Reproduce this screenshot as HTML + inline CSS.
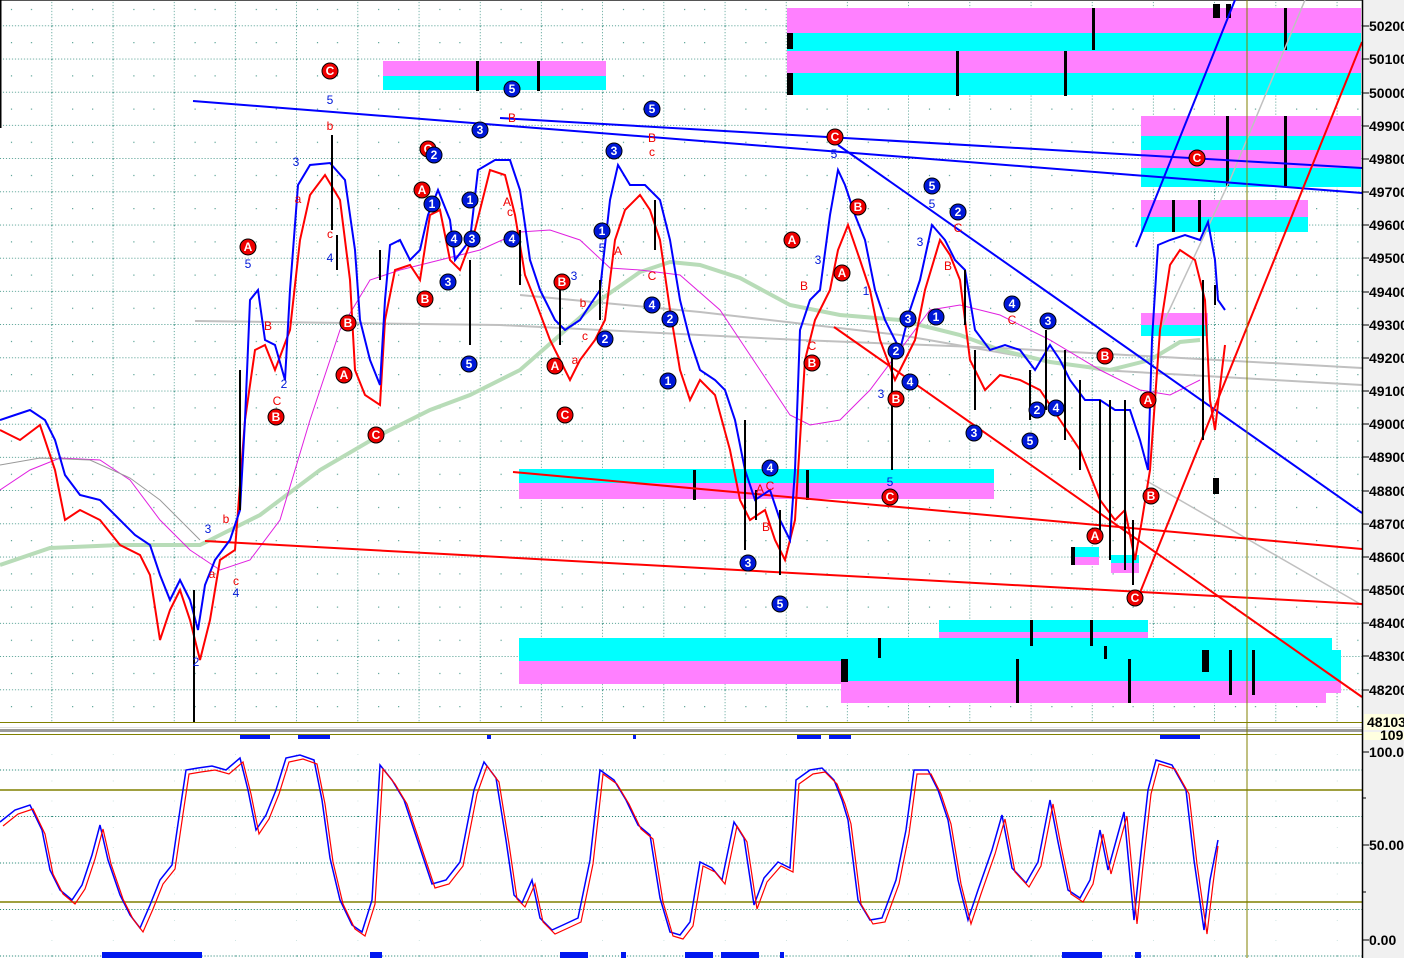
<!DOCTYPE html>
<html><head><meta charset="utf-8"><style>
html,body{margin:0;padding:0;background:#fff;}
svg{display:block;font-family:"Liberation Sans",sans-serif;}
.ax{font-family:"Liberation Sans",sans-serif;font-size:14px;font-weight:bold;fill:#000;}
.cr{fill:#e00;stroke:#000;stroke-width:1}
.cb{fill:#0018d8;stroke:#000;stroke-width:1}
.lt{fill:#fff;font-size:12px;font-weight:bold;text-anchor:middle}
.rt{fill:#e00;font-size:12px;text-anchor:middle}
.bt{fill:#0018d8;font-size:12px;text-anchor:middle}
circle.cr,circle.cb{r:8px}
</style></head><body>
<svg width="1404" height="958" viewBox="0 0 1404 958" xmlns="http://www.w3.org/2000/svg">
<defs>
<pattern id="g" x="-9" y="-7" width="61.2" height="33.2" patternUnits="userSpaceOnUse">
<line x1="0" y1="33" x2="61.2" y2="33" stroke="#107a68" stroke-width="1" stroke-dasharray="1,2"/>
<line x1="61" y1="0" x2="61" y2="33.2" stroke="#107a68" stroke-width="1" stroke-dasharray="1,2"/>
<rect x="20" y="16" width="1" height="1" fill="#107a68"/><rect x="40" y="16" width="1" height="1" fill="#107a68"/>
</pattern>
<pattern id="g2" x="-9" y="-20" width="61.2" height="46.5" patternUnits="userSpaceOnUse">
<line x1="0" y1="46" x2="61.2" y2="46" stroke="#107a68" stroke-width="1" stroke-dasharray="1,2"/>
<rect x="61" y="10" width="1" height="1" fill="#107a68"/><rect x="61" y="30" width="1" height="1" fill="#107a68"/>
</pattern>
</defs>
<rect x="0" y="0" width="1362" height="722" fill="url(#g)"/>
<rect x="0" y="736" width="1362" height="222" fill="url(#g2)"/>
<line x1="0" y1="0.5" x2="1362" y2="0.5" stroke="#555"/>
<line x1="0.5" y1="0" x2="0.5" y2="128" stroke="#000" stroke-width="2"/>

<rect x="787" y="8" width="574" height="25" fill="#ff80ff"/>
<rect x="787" y="33" width="574" height="18" fill="#00ffff"/>
<rect x="787" y="51" width="574" height="22" fill="#ff80ff"/>
<rect x="787" y="73" width="574" height="22" fill="#00ffff"/>
<rect x="383" y="61" width="223" height="15" fill="#ff80ff"/>
<rect x="383" y="76" width="223" height="14" fill="#00ffff"/>
<rect x="1141" y="116" width="220" height="20" fill="#ff80ff"/>
<rect x="1141" y="136" width="220" height="14" fill="#00ffff"/>
<rect x="1141" y="150" width="220" height="18" fill="#ff80ff"/>
<rect x="1141" y="168" width="220" height="19" fill="#00ffff"/>
<rect x="1141" y="200" width="167" height="17" fill="#ff80ff"/>
<rect x="1141" y="217" width="167" height="15" fill="#00ffff"/>
<rect x="1141" y="313" width="67" height="12" fill="#ff80ff"/>
<rect x="1141" y="325" width="67" height="11" fill="#00ffff"/>
<rect x="519" y="469" width="475" height="14" fill="#00ffff"/>
<rect x="519" y="483" width="475" height="16" fill="#ff80ff"/>
<rect x="939" y="620" width="209" height="12" fill="#00ffff"/>
<rect x="939" y="632" width="209" height="12" fill="#ff80ff"/>
<rect x="519" y="638" width="813" height="23" fill="#00ffff"/>
<rect x="519" y="661" width="322" height="23" fill="#ff80ff"/>
<rect x="841" y="650" width="500" height="31" fill="#00ffff"/>
<rect x="841" y="681" width="500" height="12" fill="#ff80ff"/>
<rect x="841" y="693" width="485" height="10" fill="#ff80ff"/>
<rect x="1071" y="547" width="28" height="10" fill="#00ffff"/><rect x="1071" y="557" width="28" height="8" fill="#ff80ff"/>
<rect x="1111" y="555" width="28" height="8" fill="#00ffff"/><rect x="1111" y="563" width="28" height="10" fill="#ff80ff"/>
<g fill="#000">
<rect x="1092" y="8" width="3" height="42"/><rect x="956" y="51" width="3" height="45"/><rect x="1064" y="51" width="3" height="45"/>
<rect x="787" y="33" width="6" height="16"/><rect x="787" y="73" width="6" height="22"/><rect x="1284" y="8" width="3" height="42"/>
<rect x="1213" y="4" width="7" height="14"/><rect x="1226" y="4" width="5" height="14"/>
<rect x="476" y="61" width="3" height="30"/><rect x="537" y="61" width="3" height="30"/>
<rect x="1226" y="116" width="3" height="70"/><rect x="1284" y="116" width="3" height="70"/>
<rect x="1172" y="200" width="3" height="32"/><rect x="1198" y="200" width="3" height="32"/>
<rect x="693" y="470" width="3" height="30"/><rect x="806" y="470" width="3" height="30"/>
<rect x="1030" y="620" width="3" height="26"/><rect x="1090" y="620" width="3" height="26"/>
<rect x="878" y="638" width="3" height="20"/><rect x="841" y="659" width="7" height="23"/><rect x="1104" y="646" width="3" height="13"/>
<rect x="1016" y="659" width="3" height="44"/><rect x="1128" y="659" width="3" height="44"/>
<rect x="1202" y="650" width="7" height="22"/><rect x="1229" y="650" width="3" height="45"/><rect x="1252" y="650" width="3" height="45"/>
<rect x="1071" y="547" width="4" height="18"/><rect x="1213" y="478" width="6" height="16"/>
</g>

<polyline fill="none" stroke="#c0c0c0" stroke-width="2" points="195,321 500,325 800,340 1000,348 1362,368"/>
<polyline fill="none" stroke="#c0c0c0" stroke-width="2" points="520,295 700,312 900,335 1100,370 1362,385"/>
<polyline fill="none" stroke="#c0c0c0" stroke-width="1.5" points="1145,480 1362,605"/>
<polyline fill="none" stroke="#c0c0c0" stroke-width="1.5" points="1160,330 1230,180 1305,0"/>
<polyline fill="none" stroke="#b8dcb8" stroke-width="4" points="0,565 50,548 120,545 200,545 260,515 320,470 380,435 430,410 470,395 520,370 560,335 600,300 640,272 670,262 700,265 740,278 790,305 840,315 900,320 960,335 1000,350 1050,362 1110,370 1150,360 1180,342 1200,340"/>
<polyline fill="none" stroke="#e020e0" stroke-width="1" points="0,490 30,470 60,458 100,460 130,480 160,520 190,550 220,570 250,560 280,520 310,420 340,330 370,280 400,270 440,260 480,250 520,232 550,230 580,240 610,268 640,270 680,275 720,310 760,370 790,415 810,425 840,420 870,390 900,350 930,310 960,305 1000,315 1050,340 1100,370 1140,390 1170,395 1200,380"/>
<polyline fill="none" stroke="#999" stroke-width="1" points="0,465 40,458 90,460 130,478 160,500 200,540"/>

<line x1="193" y1="101" x2="1362" y2="193" stroke="#0000ff" stroke-width="2"/>
<line x1="500" y1="118" x2="1362" y2="168" stroke="#0000ff" stroke-width="2"/>
<line x1="838" y1="145" x2="1362" y2="513" stroke="#0000ff" stroke-width="2"/>
<line x1="1136" y1="247" x2="1235" y2="0" stroke="#0000ff" stroke-width="2"/>
<line x1="513" y1="472" x2="1362" y2="549" stroke="#ff0000" stroke-width="2"/>
<line x1="205" y1="541" x2="1362" y2="604" stroke="#ff0000" stroke-width="2"/>
<line x1="834" y1="327" x2="1362" y2="697" stroke="#ff0000" stroke-width="2"/>
<line x1="1137" y1="600" x2="1362" y2="42" stroke="#ff0000" stroke-width="2"/>

<polyline fill="none" stroke="#ff0000" stroke-width="2" points="0,430 20,440 40,425 55,470 65,520 80,510 100,520 120,545 140,555 150,575 160,640 170,610 180,590 190,620 200,660 210,620 220,560 235,550 245,420 255,350 265,345 275,370 290,330 300,240 310,195 325,175 340,200 350,280 355,370 365,395 380,405 385,320 395,270 410,265 420,280 430,215 440,210 450,260 460,270 475,230 490,170 505,175 515,215 525,275 535,300 550,340 560,360 570,380 580,360 595,340 605,320 615,240 625,210 640,195 650,210 660,240 670,310 680,370 690,400 700,380 715,395 730,450 740,500 750,520 765,510 775,540 785,560 795,520 805,360 815,320 830,290 838,250 848,225 860,260 870,290 880,340 895,380 905,360 915,340 925,290 940,240 950,255 960,280 970,360 985,390 1000,375 1020,380 1040,390 1060,420 1080,450 1100,500 1115,520 1125,510 1135,560 1142,520 1150,470 1160,330 1170,265 1180,250 1195,260 1205,300 1210,400 1215,430 1222,370 1225,345"/>
<polyline fill="none" stroke="#0000ff" stroke-width="2" points="0,420 15,415 30,410 45,420 55,440 65,475 80,495 100,500 120,520 135,535 150,545 160,575 170,600 180,580 190,600 198,630 205,585 215,560 230,540 240,510 245,420 250,300 258,290 265,340 275,345 285,380 290,290 298,185 310,165 330,163 345,180 355,250 360,320 370,360 380,385 385,300 390,245 400,240 410,260 420,250 428,215 438,190 450,220 455,260 470,240 478,170 495,160 510,160 520,190 530,260 540,290 555,320 565,330 580,320 590,305 600,290 610,200 618,165 630,185 645,185 660,200 670,240 680,300 690,340 700,370 715,380 725,390 735,420 745,470 755,500 770,490 780,520 790,540 795,470 800,330 810,300 820,290 830,215 838,170 845,185 855,215 865,240 875,290 885,320 900,350 910,310 920,280 932,225 945,240 955,260 965,270 975,330 990,350 1005,345 1020,350 1035,370 1050,345 1060,360 1070,380 1085,400 1100,400 1115,410 1130,410 1140,440 1148,470 1152,340 1158,245 1170,240 1185,235 1200,240 1208,222 1215,260 1218,300 1225,310"/>
<g stroke="#000" stroke-width="2">
<line x1="194" y1="590" x2="194" y2="722"/><line x1="240" y1="370" x2="240" y2="510"/><line x1="332" y1="135" x2="332" y2="230"/>
<line x1="337" y1="235" x2="337" y2="270"/><line x1="380" y1="250" x2="380" y2="280"/><line x1="470" y1="260" x2="470" y2="345"/>
<line x1="520" y1="230" x2="520" y2="285"/><line x1="560" y1="280" x2="560" y2="345"/><line x1="600" y1="280" x2="600" y2="320"/>
<line x1="655" y1="200" x2="655" y2="250"/><line x1="745" y1="420" x2="745" y2="550"/><line x1="756" y1="490" x2="756" y2="520"/>
<line x1="780" y1="510" x2="780" y2="575"/><line x1="892" y1="350" x2="892" y2="470"/><line x1="965" y1="270" x2="965" y2="325"/>
<line x1="975" y1="350" x2="975" y2="410"/><line x1="1030" y1="370" x2="1030" y2="420"/><line x1="1046" y1="330" x2="1046" y2="410"/>
<line x1="1065" y1="350" x2="1065" y2="440"/><line x1="1080" y1="380" x2="1080" y2="470"/><line x1="1100" y1="400" x2="1100" y2="540"/>
<line x1="1110" y1="400" x2="1110" y2="560"/><line x1="1125" y1="400" x2="1125" y2="570"/><line x1="1133" y1="520" x2="1133" y2="585"/>
<line x1="1203" y1="280" x2="1203" y2="440"/><line x1="1215" y1="285" x2="1215" y2="305"/>
</g>

<g>
<circle class="cr" cx="330" cy="71" r="8"/><text class="lt" x="330" y="75">C</text>
<circle class="cb" cx="512" cy="89" r="8"/><text class="lt" x="512" y="93">5</text>
<circle class="cb" cx="652" cy="109" r="8"/><text class="lt" x="652" y="113">5</text>
<circle class="cr" cx="835" cy="137" r="8"/><text class="lt" x="835" y="141">C</text>
<circle class="cr" cx="1197" cy="158" r="8"/><text class="lt" x="1197" y="162">C</text>
<circle class="cb" cx="480" cy="130" r="8"/><text class="lt" x="480" y="134">3</text>
<circle class="cb" cx="614" cy="151" r="8"/><text class="lt" x="614" y="155">3</text>
<circle class="cr" cx="428" cy="149" r="8"/><text class="lt" x="428" y="153">C</text>
<circle class="cb" cx="434" cy="155" r="8"/><text class="lt" x="434" y="159">2</text>
<circle class="cr" cx="422" cy="190" r="8"/><text class="lt" x="422" y="194">A</text>
<circle class="cb" cx="432" cy="204" r="8"/><text class="lt" x="432" y="208">1</text>
<circle class="cb" cx="470" cy="200" r="8"/><text class="lt" x="470" y="204">1</text>
<circle class="cb" cx="454" cy="239" r="8"/><text class="lt" x="454" y="243">4</text>
<circle class="cb" cx="472" cy="239" r="8"/><text class="lt" x="472" y="243">3</text>
<circle class="cb" cx="512" cy="239" r="8"/><text class="lt" x="512" y="243">4</text>
<circle class="cb" cx="448" cy="282" r="8"/><text class="lt" x="448" y="286">3</text>
<circle class="cr" cx="425" cy="299" r="8"/><text class="lt" x="425" y="303">B</text>
<circle class="cb" cx="469" cy="364" r="8"/><text class="lt" x="469" y="368">5</text>
<circle class="cr" cx="248" cy="247" r="8"/><text class="lt" x="248" y="251">A</text>
<circle class="cr" cx="348" cy="323" r="8"/><text class="lt" x="348" y="327">B</text>
<circle class="cr" cx="344" cy="375" r="8"/><text class="lt" x="344" y="379">A</text>
<circle class="cr" cx="376" cy="435" r="8"/><text class="lt" x="376" y="439">C</text>
<circle class="cr" cx="276" cy="417" r="8"/><text class="lt" x="276" y="421">B</text>
<circle class="cr" cx="562" cy="282" r="8"/><text class="lt" x="562" y="286">B</text>
<circle class="cr" cx="555" cy="366" r="8"/><text class="lt" x="555" y="370">A</text>
<circle class="cr" cx="565" cy="415" r="8"/><text class="lt" x="565" y="419">C</text>
<circle class="cb" cx="605" cy="339" r="8"/><text class="lt" x="605" y="343">2</text>
<circle class="cb" cx="602" cy="231" r="8"/><text class="lt" x="602" y="235">1</text>
<circle class="cb" cx="652" cy="305" r="8"/><text class="lt" x="652" y="309">4</text>
<circle class="cb" cx="670" cy="319" r="8"/><text class="lt" x="670" y="323">2</text>
<circle class="cb" cx="668" cy="381" r="8"/><text class="lt" x="668" y="385">1</text>
<circle class="cr" cx="792" cy="240" r="8"/><text class="lt" x="792" y="244">A</text>
<circle class="cr" cx="858" cy="207" r="8"/><text class="lt" x="858" y="211">B</text>
<circle class="cr" cx="842" cy="273" r="8"/><text class="lt" x="842" y="277">A</text>
<circle class="cr" cx="812" cy="363" r="8"/><text class="lt" x="812" y="367">B</text>
<circle class="cb" cx="770" cy="468" r="8"/><text class="lt" x="770" y="472">4</text>
<circle class="cb" cx="748" cy="563" r="8"/><text class="lt" x="748" y="567">3</text>
<circle class="cb" cx="780" cy="604" r="8"/><text class="lt" x="780" y="608">5</text>
<circle class="cr" cx="890" cy="497" r="8"/><text class="lt" x="890" y="501">C</text>
<circle class="cb" cx="932" cy="186" r="8"/><text class="lt" x="932" y="190">5</text>
<circle class="cb" cx="958" cy="212" r="8"/><text class="lt" x="958" y="216">2</text>
<circle class="cb" cx="908" cy="319" r="8"/><text class="lt" x="908" y="323">3</text>
<circle class="cb" cx="936" cy="317" r="8"/><text class="lt" x="936" y="321">1</text>
<circle class="cb" cx="896" cy="351" r="8"/><text class="lt" x="896" y="355">2</text>
<circle class="cb" cx="910" cy="382" r="8"/><text class="lt" x="910" y="386">4</text>
<circle class="cr" cx="896" cy="399" r="8"/><text class="lt" x="896" y="403">B</text>
<circle class="cb" cx="1012" cy="304" r="8"/><text class="lt" x="1012" y="308">4</text>
<circle class="cb" cx="1048" cy="321" r="8"/><text class="lt" x="1048" y="325">3</text>
<circle class="cb" cx="974" cy="433" r="8"/><text class="lt" x="974" y="437">3</text>
<circle class="cb" cx="1037" cy="410" r="8"/><text class="lt" x="1037" y="414">2</text>
<circle class="cb" cx="1030" cy="441" r="8"/><text class="lt" x="1030" y="445">5</text>
<circle class="cb" cx="1056" cy="408" r="8"/><text class="lt" x="1056" y="412">4</text>
<circle class="cr" cx="1105" cy="356" r="8"/><text class="lt" x="1105" y="360">B</text>
<circle class="cr" cx="1148" cy="400" r="8"/><text class="lt" x="1148" y="404">A</text>
<circle class="cr" cx="1151" cy="496" r="8"/><text class="lt" x="1151" y="500">B</text>
<circle class="cr" cx="1095" cy="536" r="8"/><text class="lt" x="1095" y="540">A</text>
<circle class="cr" cx="1135" cy="598" r="8"/><text class="lt" x="1135" y="602">C</text>
<text class="bt" x="330" y="104">5</text><text class="rt" x="330" y="130">b</text>
<text class="rt" x="512" y="122">B</text><text class="rt" x="652" y="142">B</text><text class="rt" x="652" y="156">c</text>
<text class="bt" x="834" y="158">5</text><text class="bt" x="296" y="166">3</text><text class="rt" x="298" y="203">a</text>
<text class="rt" x="330" y="238">c</text><text class="bt" x="330" y="262">4</text><text class="bt" x="248" y="268">5</text>
<text class="rt" x="268" y="330">B</text><text class="rt" x="277" y="405">C</text><text class="bt" x="284" y="388">2</text>
<text class="rt" x="507" y="206">A</text><text class="rt" x="510" y="216">c</text><text class="bt" x="574" y="280">3</text>
<text class="rt" x="583" y="307">b</text><text class="rt" x="585" y="340">c</text><text class="rt" x="575" y="364">a</text>
<text class="bt" x="602" y="252">5</text><text class="rt" x="618" y="255">A</text><text class="rt" x="652" y="280">C</text>
<text class="bt" x="818" y="264">3</text><text class="rt" x="804" y="290">B</text><text class="rt" x="812" y="350">C</text>
<text class="bt" x="866" y="295">1</text><text class="bt" x="920" y="246">3</text><text class="bt" x="932" y="208">5</text>
<text class="rt" x="958" y="232">C</text><text class="rt" x="948" y="270">B</text><text class="rt" x="1012" y="324">C</text>
<text class="bt" x="881" y="398">3</text><text class="bt" x="890" y="486">5</text>
<text class="rt" x="770" y="490">C</text><text class="rt" x="760" y="493">A</text><text class="rt" x="766" y="531">B</text>
<text class="bt" x="208" y="533">3</text><text class="rt" x="226" y="523">b</text><text class="rt" x="212" y="578">a</text>
<text class="rt" x="236" y="585">c</text><text class="bt" x="236" y="597">4</text><text class="bt" x="196" y="666">2</text>
</g>

<rect x="0" y="722" width="1362" height="1" fill="#808000"/>
<rect x="0" y="724" width="1362" height="11" fill="#fff"/>
<rect x="0" y="727" width="1362" height="1" fill="#e0e0e0"/>
<rect x="0" y="729" width="1362" height="3" fill="#9a9a9a"/>
<rect x="0" y="734" width="1362" height="1" fill="#808000"/>
<g fill="#0018f0">
<rect x="240" y="735" width="30" height="4"/><rect x="298" y="735" width="32" height="4"/><rect x="487" y="735" width="4" height="4"/>
<rect x="633" y="735" width="3" height="4"/><rect x="797" y="735" width="24" height="4"/><rect x="829" y="735" width="22" height="4"/>
<rect x="1160" y="735" width="40" height="4"/>
<rect x="102" y="952" width="100" height="6"/><rect x="370" y="952" width="12" height="6"/><rect x="560" y="952" width="28" height="6"/>
<rect x="621" y="952" width="5" height="6"/><rect x="685" y="952" width="28" height="6"/><rect x="721" y="952" width="38" height="6"/>
<rect x="780" y="952" width="4" height="6"/><rect x="1062" y="952" width="40" height="6"/><rect x="1135" y="952" width="6" height="6"/>
</g>

<line x1="0" y1="790" x2="1362" y2="790" stroke="#808000" stroke-width="1.5"/>
<line x1="0" y1="902" x2="1362" y2="902" stroke="#808000" stroke-width="1.5"/>
<line x1="1247" y1="0" x2="1247" y2="958" stroke="#808000" stroke-width="1"/>
<polyline fill="none" stroke="#0000ff" stroke-width="1.5" points="0,822 15,810 30,805 42,830 50,870 60,890 72,900 82,885 92,855 100,825 108,860 120,895 130,915 140,928 150,905 160,880 172,865 180,810 186,770 198,768 212,766 226,770 240,758 248,790 256,830 266,815 276,790 286,758 300,755 314,760 322,800 330,858 340,900 352,925 362,932 372,900 380,765 392,780 404,800 414,830 424,860 432,884 446,880 460,862 474,790 484,762 496,778 506,840 514,895 522,903 532,880 540,918 552,930 563,925 578,918 590,860 600,770 614,780 626,800 638,825 650,835 660,898 670,932 680,935 690,922 700,862 712,868 722,880 734,822 744,838 754,905 764,878 778,862 790,868 796,780 810,770 822,768 834,780 842,800 848,820 858,900 870,920 882,918 896,880 906,830 914,770 928,770 938,790 948,820 958,880 968,920 978,890 992,850 1002,815 1012,868 1026,883 1038,862 1050,800 1058,842 1068,890 1080,898 1090,880 1100,830 1108,870 1124,812 1134,920 1140,862 1148,790 1156,760 1172,765 1186,790 1194,860 1204,930 1210,880 1218,840"/>
<polyline fill="none" stroke="#ff0000" stroke-width="1.2" points="3,826 18,814 33,809 45,834 53,874 63,894 75,904 85,889 95,859 103,829 111,864 123,899 133,919 143,932 153,909 163,884 175,869 183,814 189,774 201,772 215,770 229,774 243,762 251,794 259,834 269,819 279,794 289,762 303,759 317,764 325,804 333,862 343,904 355,929 365,936 375,904 383,769 395,784 407,804 417,834 427,864 435,888 449,884 463,866 477,794 487,766 499,782 509,844 517,899 525,907 535,884 543,922 555,934 566,929 581,922 593,864 603,774 617,784 629,804 641,829 653,839 663,902 673,936 683,939 693,926 703,866 715,872 725,884 737,826 747,842 757,909 767,882 781,866 793,872 799,784 813,774 825,772 837,784 845,804 851,824 861,904 873,924 885,922 899,884 909,834 917,774 931,774 941,794 951,824 961,884 971,924 981,894 995,854 1005,819 1015,872 1029,887 1041,866 1053,804 1061,846 1071,894 1083,902 1093,884 1103,834 1111,874 1127,816 1137,924 1143,866 1151,794 1159,764 1175,769 1189,794 1197,864 1207,934 1213,884 1218,846"/>

<rect x="1362" y="0" width="42" height="958" fill="#f0f0f0"/>
<line x1="1362.5" y1="0" x2="1362.5" y2="958" stroke="#000" stroke-width="1.5"/>
<g stroke="#000" stroke-width="1">
<line x1="1363" y1="26" x2="1369" y2="26"/><line x1="1363" y1="59" x2="1369" y2="59"/><line x1="1363" y1="93" x2="1369" y2="93"/>
<line x1="1363" y1="126" x2="1369" y2="126"/><line x1="1363" y1="159" x2="1369" y2="159"/><line x1="1363" y1="192" x2="1369" y2="192"/>
<line x1="1363" y1="225" x2="1369" y2="225"/><line x1="1363" y1="258" x2="1369" y2="258"/><line x1="1363" y1="292" x2="1369" y2="292"/>
<line x1="1363" y1="325" x2="1369" y2="325"/><line x1="1363" y1="358" x2="1369" y2="358"/><line x1="1363" y1="391" x2="1369" y2="391"/>
<line x1="1363" y1="424" x2="1369" y2="424"/><line x1="1363" y1="457" x2="1369" y2="457"/><line x1="1363" y1="491" x2="1369" y2="491"/>
<line x1="1363" y1="524" x2="1369" y2="524"/><line x1="1363" y1="557" x2="1369" y2="557"/><line x1="1363" y1="590" x2="1369" y2="590"/>
<line x1="1363" y1="623" x2="1369" y2="623"/><line x1="1363" y1="656" x2="1369" y2="656"/><line x1="1363" y1="690" x2="1369" y2="690"/>
<line x1="1363" y1="752" x2="1369" y2="752"/><line x1="1363" y1="798" x2="1366" y2="798"/><line x1="1363" y1="845" x2="1369" y2="845"/>
<line x1="1363" y1="892" x2="1366" y2="892"/><line x1="1363" y1="940" x2="1369" y2="940"/>
</g>
<g class="ax">
<text x="1369" y="31">50200</text><text x="1369" y="64">50100</text><text x="1369" y="98">50000</text>
<text x="1369" y="131">49900</text><text x="1369" y="164">49800</text><text x="1369" y="197">49700</text>
<text x="1369" y="230">49600</text><text x="1369" y="263">49500</text><text x="1369" y="297">49400</text>
<text x="1369" y="330">49300</text><text x="1369" y="363">49200</text><text x="1369" y="396">49100</text>
<text x="1369" y="429">49000</text><text x="1369" y="462">48900</text><text x="1369" y="496">48800</text>
<text x="1369" y="529">48700</text><text x="1369" y="562">48600</text><text x="1369" y="595">48500</text>
<text x="1369" y="628">48400</text><text x="1369" y="661">48300</text><text x="1369" y="695">48200</text>
</g>
<rect x="1364" y="714" width="40" height="16" fill="#ffffe0"/>
<text class="ax" x="1367" y="727">48103</text>
<rect x="1364" y="732" width="40" height="8" fill="#ffffe0"/>
<text class="ax" x="1380" y="740" font-size="11">109.</text>
<g class="ax"><text x="1369" y="757">100.00</text><text x="1369" y="850">50.00</text><text x="1369" y="945">0.00</text></g>
</svg>
</body></html>
